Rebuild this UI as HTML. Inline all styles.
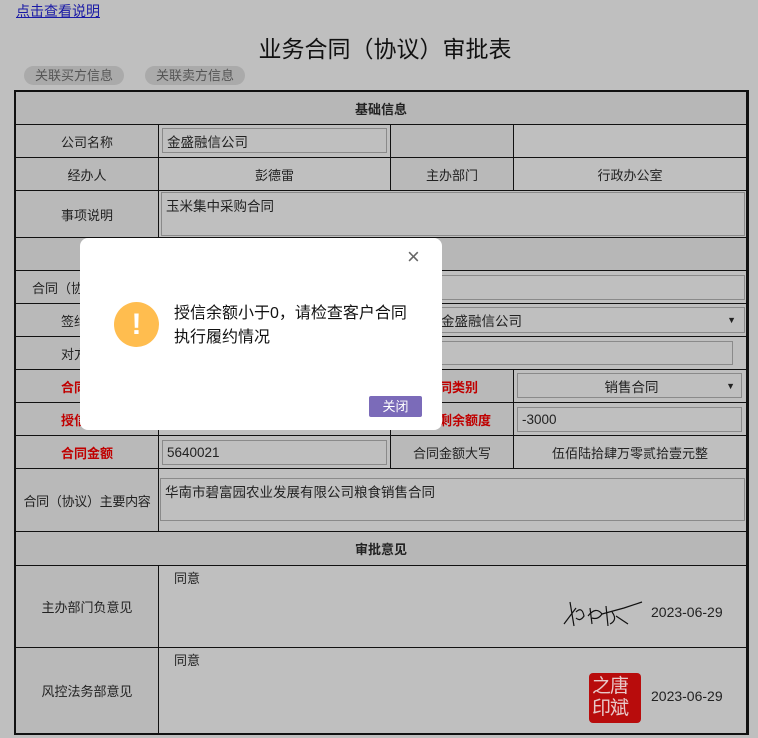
<!DOCTYPE html>
<html><head><meta charset="utf-8"><style>
*{box-sizing:border-box;margin:0;padding:0}
body{width:758px;height:738px;background:#bfbfbf;font-family:"Liberation Sans","Noto Sans CJK SC",sans-serif;font-size:13px;color:#222;position:relative;overflow:hidden}
.a{position:absolute}
.c{position:absolute;display:flex;align-items:center;justify-content:center;border-right:1px solid #111;border-bottom:1px solid #111}
.l{background:#b9b9b9}
.h{background:#b7b7b7;font-weight:bold}
.r{color:#c00000;font-weight:bold}
.in{position:absolute;border:1px solid #8a8a8a;background:#bfbfbf;padding-left:4px;display:flex;align-items:center;font-size:13.5px}
.ta{align-items:flex-start;padding-top:2px}
.btn{position:absolute;top:66px;height:19px;border-radius:10px;background:#aaa;color:#555;font-size:13px;line-height:19px;text-align:center}
</style></head><body>
<a class="a" style="left:16px;top:1px;color:#1a1aa6;text-decoration:underline;font-size:14px">点击查看说明</a>
<div class="a" style="left:0;width:758px;top:30px;text-align:center;font-size:23px;color:#111;padding-left:12px">业务合同（协议）审批表</div>
<div class="btn" style="left:24px;width:100px">关联买方信息</div>
<div class="btn" style="left:145px;width:100px">关联卖方信息</div>
<div class="a" style="left:14px;top:90px;width:735px;height:645px;border:2px solid #111;border-right-width:3px"></div>
<div class="c h" style="left:16px;top:92px;width:731px;height:33px">基础信息</div>
<div class="c l" style="left:16px;top:125px;width:143px;height:33px">公司名称</div>
<div class="c" style="left:159px;top:125px;width:232px;height:33px"></div>
<div class="c l" style="left:391px;top:125px;width:123px;height:33px"></div>
<div class="c" style="left:514px;top:125px;width:233px;height:33px"></div>
<div class="in" style="left:162px;top:128px;width:225px;height:25px">金盛融信公司</div>
<div class="c l" style="left:16px;top:158px;width:143px;height:33px">经办人</div>
<div class="c" style="left:159px;top:158px;width:232px;height:33px">彭德雷</div>
<div class="c l" style="left:391px;top:158px;width:123px;height:33px">主办部门</div>
<div class="c" style="left:514px;top:158px;width:233px;height:33px">行政办公室</div>
<div class="c l" style="left:16px;top:191px;width:143px;height:47px">事项说明</div>
<div class="c" style="left:159px;top:191px;width:588px;height:47px"></div>
<div class="in ta" style="left:161px;top:192px;width:584px;height:44px">玉米集中采购合同</div>
<div class="c h" style="left:16px;top:238px;width:731px;height:33px"></div>
<div class="c l" style="left:16px;top:271px;width:143px;height:33px;justify-content:flex-start;padding-left:16px">合同（协议）</div>
<div class="c" style="left:159px;top:271px;width:588px;height:33px"></div>
<div class="in" style="left:420px;top:275px;width:325px;height:25px"></div>
<div class="c l" style="left:16px;top:304px;width:143px;height:33px">签约主体</div>
<div class="c" style="left:159px;top:304px;width:588px;height:33px"></div>
<div class="in" style="left:420px;top:307px;width:325px;height:26px;padding-left:20px">金盛融信公司<span style="position:absolute;right:8px;font-size:9px">▼</span></div>
<div class="c l" style="left:16px;top:337px;width:143px;height:33px">对方单位</div>
<div class="c" style="left:159px;top:337px;width:588px;height:33px"></div>
<div class="in" style="left:420px;top:341px;width:313px;height:24px"></div>
<div class="c l r" style="left:16px;top:370px;width:143px;height:33px">合同编号</div>
<div class="c" style="left:159px;top:370px;width:232px;height:33px"></div>
<div class="c l r" style="left:391px;top:370px;width:123px;height:33px">合同类别</div>
<div class="c" style="left:514px;top:370px;width:233px;height:33px"></div>
<div class="in" style="left:517px;top:373px;width:225px;height:25px;justify-content:center">销售合同<span style="position:absolute;right:6px;font-size:9px">▼</span></div>
<div class="c l r" style="left:16px;top:403px;width:143px;height:33px">授信额度</div>
<div class="c" style="left:159px;top:403px;width:232px;height:33px"></div>
<div class="c l r" style="left:391px;top:403px;width:123px;height:33px">授信剩余额度</div>
<div class="c" style="left:514px;top:403px;width:233px;height:33px"></div>
<div class="in" style="left:517px;top:407px;width:225px;height:25px">-3000</div>
<div class="c l r" style="left:16px;top:436px;width:143px;height:33px">合同金额</div>
<div class="c" style="left:159px;top:436px;width:232px;height:33px"></div>
<div class="in" style="left:162px;top:440px;width:225px;height:25px">5640021</div>
<div class="c l" style="left:391px;top:436px;width:123px;height:33px">合同金额大写</div>
<div class="c" style="left:514px;top:436px;width:233px;height:33px">伍佰陆拾肆万零贰拾壹元整</div>
<div class="c l" style="left:16px;top:469px;width:143px;height:63px;font-size:13px;white-space:nowrap;letter-spacing:-0.3px">合同（协议）主要内容</div>
<div class="c" style="left:159px;top:469px;width:588px;height:63px"></div>
<div class="in ta" style="left:160px;top:478px;width:585px;height:43px">华南市碧富园农业发展有限公司粮食销售合同</div>
<div class="c h" style="left:16px;top:532px;width:731px;height:34px">审批意见</div>
<div class="c l" style="left:16px;top:566px;width:143px;height:82px">主办部门负意见</div>
<div class="c" style="left:159px;top:566px;width:588px;height:82px"></div>
<div class="a" style="left:174px;top:568px">同意</div>
<svg class="a" style="left:562px;top:598px" width="82" height="30" viewBox="0 0 82 30"><path d="M2 26 L14 10 M8 4 L12 28 M14 14 Q20 8 22 18 Q18 24 14 20 M28 10 L30 26 M26 18 Q34 8 40 16 Q36 22 30 20 M44 8 L46 28 M40 16 L62 10 M50 14 Q56 22 48 26 M54 18 L66 26 M62 10 L80 4" stroke="#111" stroke-width="1.2" fill="none"/></svg>
<div class="a" style="left:651px;top:604px;font-size:14px">2023-06-29</div>
<div class="c l" style="left:16px;top:648px;width:143px;height:86px">风控法务部意见</div>
<div class="c" style="left:159px;top:648px;width:588px;height:86px"></div>
<div class="a" style="left:174px;top:650px">同意</div>
<div class="a" style="left:589px;top:673px;width:52px;height:50px;background:#b80c0c;border-radius:4px;color:#e8c8c8;font-size:19px;line-height:22px;padding:3px 0 0 3px;letter-spacing:-1px">之唐<br>印斌</div>
<div class="a" style="left:651px;top:688px;font-size:14px">2023-06-29</div>
<div class="a" style="left:80px;top:238px;width:362px;height:192px;background:#fff;border-radius:8px">
<div class="a" style="left:327px;top:6px;font-size:22px;color:#666;font-weight:300">×</div>
<div class="a" style="left:34px;top:64px;width:45px;height:45px;border-radius:50%;background:#ffbd4f;color:#fff;font-size:30px;font-weight:bold;text-align:center;line-height:45px">!</div>
<div class="a" style="left:94px;top:64px;width:260px;font-size:16px;line-height:24px;color:#111;white-space:nowrap">授信余额小于0，请检查客户合同<br>执行履约情况</div>
<div class="a" style="left:289px;top:158px;width:53px;height:21px;background:#7b6bb9;color:#fff;font-size:13px;line-height:21px;text-align:center;border-radius:2px">关闭</div>
</div>
</body></html>
